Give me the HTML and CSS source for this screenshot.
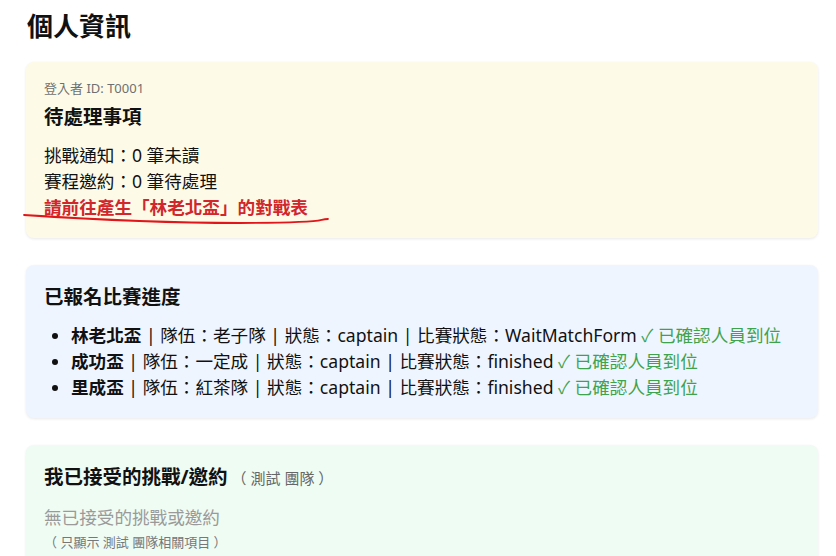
FILE: index.html
```html
<!DOCTYPE html>
<html lang="zh-Hant">
<head>
<meta charset="utf-8">
<title>個人資訊</title>
<link rel="stylesheet" href="styles.css">
</head>
<body>
<main class="page">
  <h2 class="page-title">個人資訊</h2>

  <section class="card card-yellow">
    <div class="login-id">登入者 ID: T0001</div>
    <h3 class="card-title">待處理事項</h3>
    <div class="lines">
      <div>挑戰通知：0 筆未讀</div>
      <div>賽程邀約：0 筆待處理</div>
      <div class="alert">請前往產生「林老北盃」的對戰表</div>
    </div>
  </section>

  <section class="card card-blue">
    <h3 class="card-title">已報名比賽進度</h3>
    <ul class="match-list">
      <li><b>林老北盃</b> | 隊伍：老子隊 | 狀態：captain | 比賽狀態：WaitMatchForm <span class="ok">✓ 已確認人員到位</span></li>
      <li><b>成功盃</b> | 隊伍：一定成 | 狀態：captain | 比賽狀態：finished <span class="ok">✓ 已確認人員到位</span></li>
      <li><b>里成盃</b> | 隊伍：紅茶隊 | 狀態：captain | 比賽狀態：finished <span class="ok">✓ 已確認人員到位</span></li>
    </ul>
  </section>

  <section class="card card-green">
    <h3 class="card-title">我已接受的挑戰/邀約<span class="team-note">（ 測試 團隊 ）</span></h3>
    <div class="empty">無已接受的挑戰或邀約</div>
    <div class="hint">（ 只顯示 測試 團隊相關項目 ）</div>
  </section>
</main>
<svg class="scribble" width="836" height="556" viewBox="0 0 836 556">
  <path d="M24 215 C 70 218, 150 223, 240 223 S 315 220, 328 219" fill="none" stroke="#e0161b" stroke-width="1.8" stroke-linecap="round"/>
</svg>
</body>
</html>
```

FILE: styles.css
```css
html, body {
  margin: 0;
  padding: 0;
  background: #ffffff;
}

body {
  font-family: "Segoe UI", "Noto Sans", "Noto Sans CJK TC", sans-serif;
  color: #111;
  font-size: 17.6px;
  line-height: 26px;
  position: relative;
}

.page {
  padding: 10px 18px 0 26px;
  display: flex;
  flex-direction: column;
  gap: 27px;
}

.page-title {
  margin: 0 0 -7px 1px;
  font-size: 26px;
  line-height: 32px;
  font-weight: 700;
  color: #111;
}

.card {
  border-radius: 8px;
  padding: 18px;
  box-shadow: 0 1px 3px rgba(0, 0, 0, 0.09);
}

.card-yellow { background: #fdfbe7; }
.card-blue { background: #eff5ff; }
.card-green { background: #effcf3; }

.login-id {
  font-size: 13px;
  line-height: 17px;
  color: #6f6f6f;
}

.card-title {
  margin: 0;
  font-size: 19.5px;
  line-height: 28px;
  font-weight: 700;
  color: #111;
}

.card-yellow .card-title { margin-top: 6px; }

.lines { margin-top: 11px; }

.alert {
  color: #d1262b;
  font-weight: 700;
}

.match-list {
  margin: 11px 0 0 0;
  padding-left: 27px;
}

.match-list b { font-weight: 700; }

.ok { color: #3fa34d; }

.team-note {
  font-size: 15px;
  font-weight: 400;
  color: #666;
  margin-left: 4px;
}

.empty {
  margin-top: 12px;
  color: #9a9a9a;
}

.hint {
  margin-top: 2px;
  font-size: 13px;
  line-height: 20px;
  color: #777;
}

.scribble {
  position: absolute;
  left: 0;
  top: 0;
  pointer-events: none;
}
```
